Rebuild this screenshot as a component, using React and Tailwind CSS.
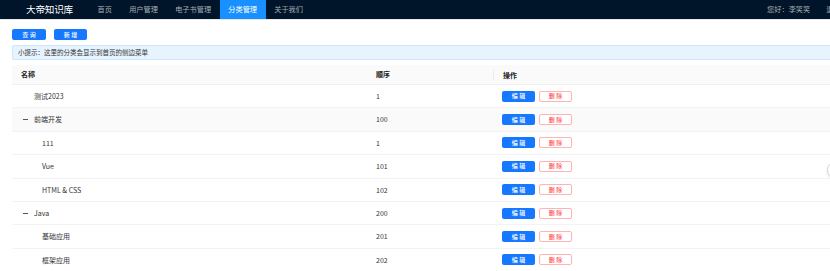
import React from 'react';

const rows = [
  { name: '测试2023', sort: 1, level: 0, leaf: true },
  { name: '前端开发', sort: 100, level: 0, open: true, hover: true },
  { name: '111', sort: 1, level: 1, leaf: true },
  { name: 'Vue', sort: 101, level: 1, leaf: true },
  { name: 'HTML & CSS', sort: 102, level: 1, leaf: true },
  { name: 'Java', sort: 200, level: 0, open: true },
  { name: '基础应用', sort: 201, level: 1, leaf: true },
  { name: '框架应用', sort: 202, level: 1, leaf: true },
];

const menu = ['首页', '用户管理', '电子书管理', '分类管理', '关于我们'];

function Row({ row }) {
  return (
    <div className={'grid grid-cols-[355px_126px_1fr] h-[23.4px] items-center border-b border-[#f3f3f3] ' + (row.hover ? 'bg-[#fafafa]' : 'bg-white')}>
      <div className="pl-[9px] flex items-center text-[7px] text-[#333]">
        <span className={row.level === 1 ? 'w-[8px]' : 'w-0'}></span>
        <span className="w-[9px] h-[8px] mr-[4px] flex items-center">
          {!row.leaf && <span className="block w-[5px] h-[1px] bg-[#555] ml-[2px]"></span>}
        </span>
        <span>{row.name}</span>
      </div>
      <div className="pl-[9px] text-[7px] text-[#333]">{row.sort}</div>
      <div className="pl-[9px] flex items-center gap-[4px]">
        <button className="w-[33px] h-[11px] rounded-[2px] bg-[#1677ff] text-white text-[6px] font-medium leading-none">编 辑</button>
        <button className="w-[33px] h-[11px] rounded-[2px] bg-white border border-[#ffb3b3] text-[#ff4d4f] text-[6px] font-medium leading-none">删 除</button>
      </div>
    </div>
  );
}

export default function App() {
  return (
    <div className="relative w-[830px] h-[271px] overflow-hidden bg-white font-['Noto_Sans_CJK_SC','Noto_Sans',sans-serif]">
      <div className="h-[20px] bg-[#001529] flex items-stretch border-b border-[#e5e7eb] overflow-hidden">
        <div className="pl-[26px] w-[89px] shrink-0 flex items-center text-white text-[9.6px] tracking-[-0.2px]">大帝知识库</div>
        {menu.map((m) => (
          <div key={m} className={'px-[8.6px] flex items-center text-[7.2px] ' + (m === '分类管理' ? 'bg-[#1890ff] text-white' : 'text-[#a6adb4]')}>
            {m}
          </div>
        ))}
        <div className="flex-1"></div>
        <div className="flex items-center text-[7.2px] text-[#a6adb4] whitespace-nowrap shrink-0 -mr-[25px]">
          <span>您好：李笑笑</span>
          <span className="ml-[16px]">退出登录</span>
        </div>
      </div>

      <div className="pl-[12px] pt-[9px] flex gap-[8px]">
        <button className="w-[34px] h-[11px] rounded-[2px] bg-[#1677ff] text-white text-[6px] font-medium leading-none">查 询</button>
        <button className="w-[33px] h-[11px] rounded-[2px] bg-[#1677ff] text-white text-[6px] font-medium leading-none">新 增</button>
      </div>

      <div className="ml-[12px] mt-[5px] h-[15px] flex items-center pl-[5px] bg-[#e6f4ff] border border-[#cfe6fb] rounded-l-[2px] border-r-0 text-[6.5px] text-[#333]">
        小提示：这里的分类会显示到首页的侧边菜单
      </div>

      <div className="ml-[12px] mt-[5px]">
        <div className="grid grid-cols-[355px_126px_1fr] h-[20px] items-center bg-[#fafafa] border-b border-[#f0f0f0] text-[7px] font-bold text-[#222]">
          <div className="pl-[9px]">名称</div>
          <div className="pl-[9px]">顺序</div>
          <div className="pl-[9px] border-l border-[#ececec] leading-[10px]">操作</div>
        </div>
        {rows.map((r) => (
          <Row key={r.name} row={r} />
        ))}
      </div>

      <div className="absolute left-[827px] top-[162px] w-[16px] h-[16px] rounded-full bg-white border border-[#d9d9d9] shadow"></div>
    </div>
  );
}
